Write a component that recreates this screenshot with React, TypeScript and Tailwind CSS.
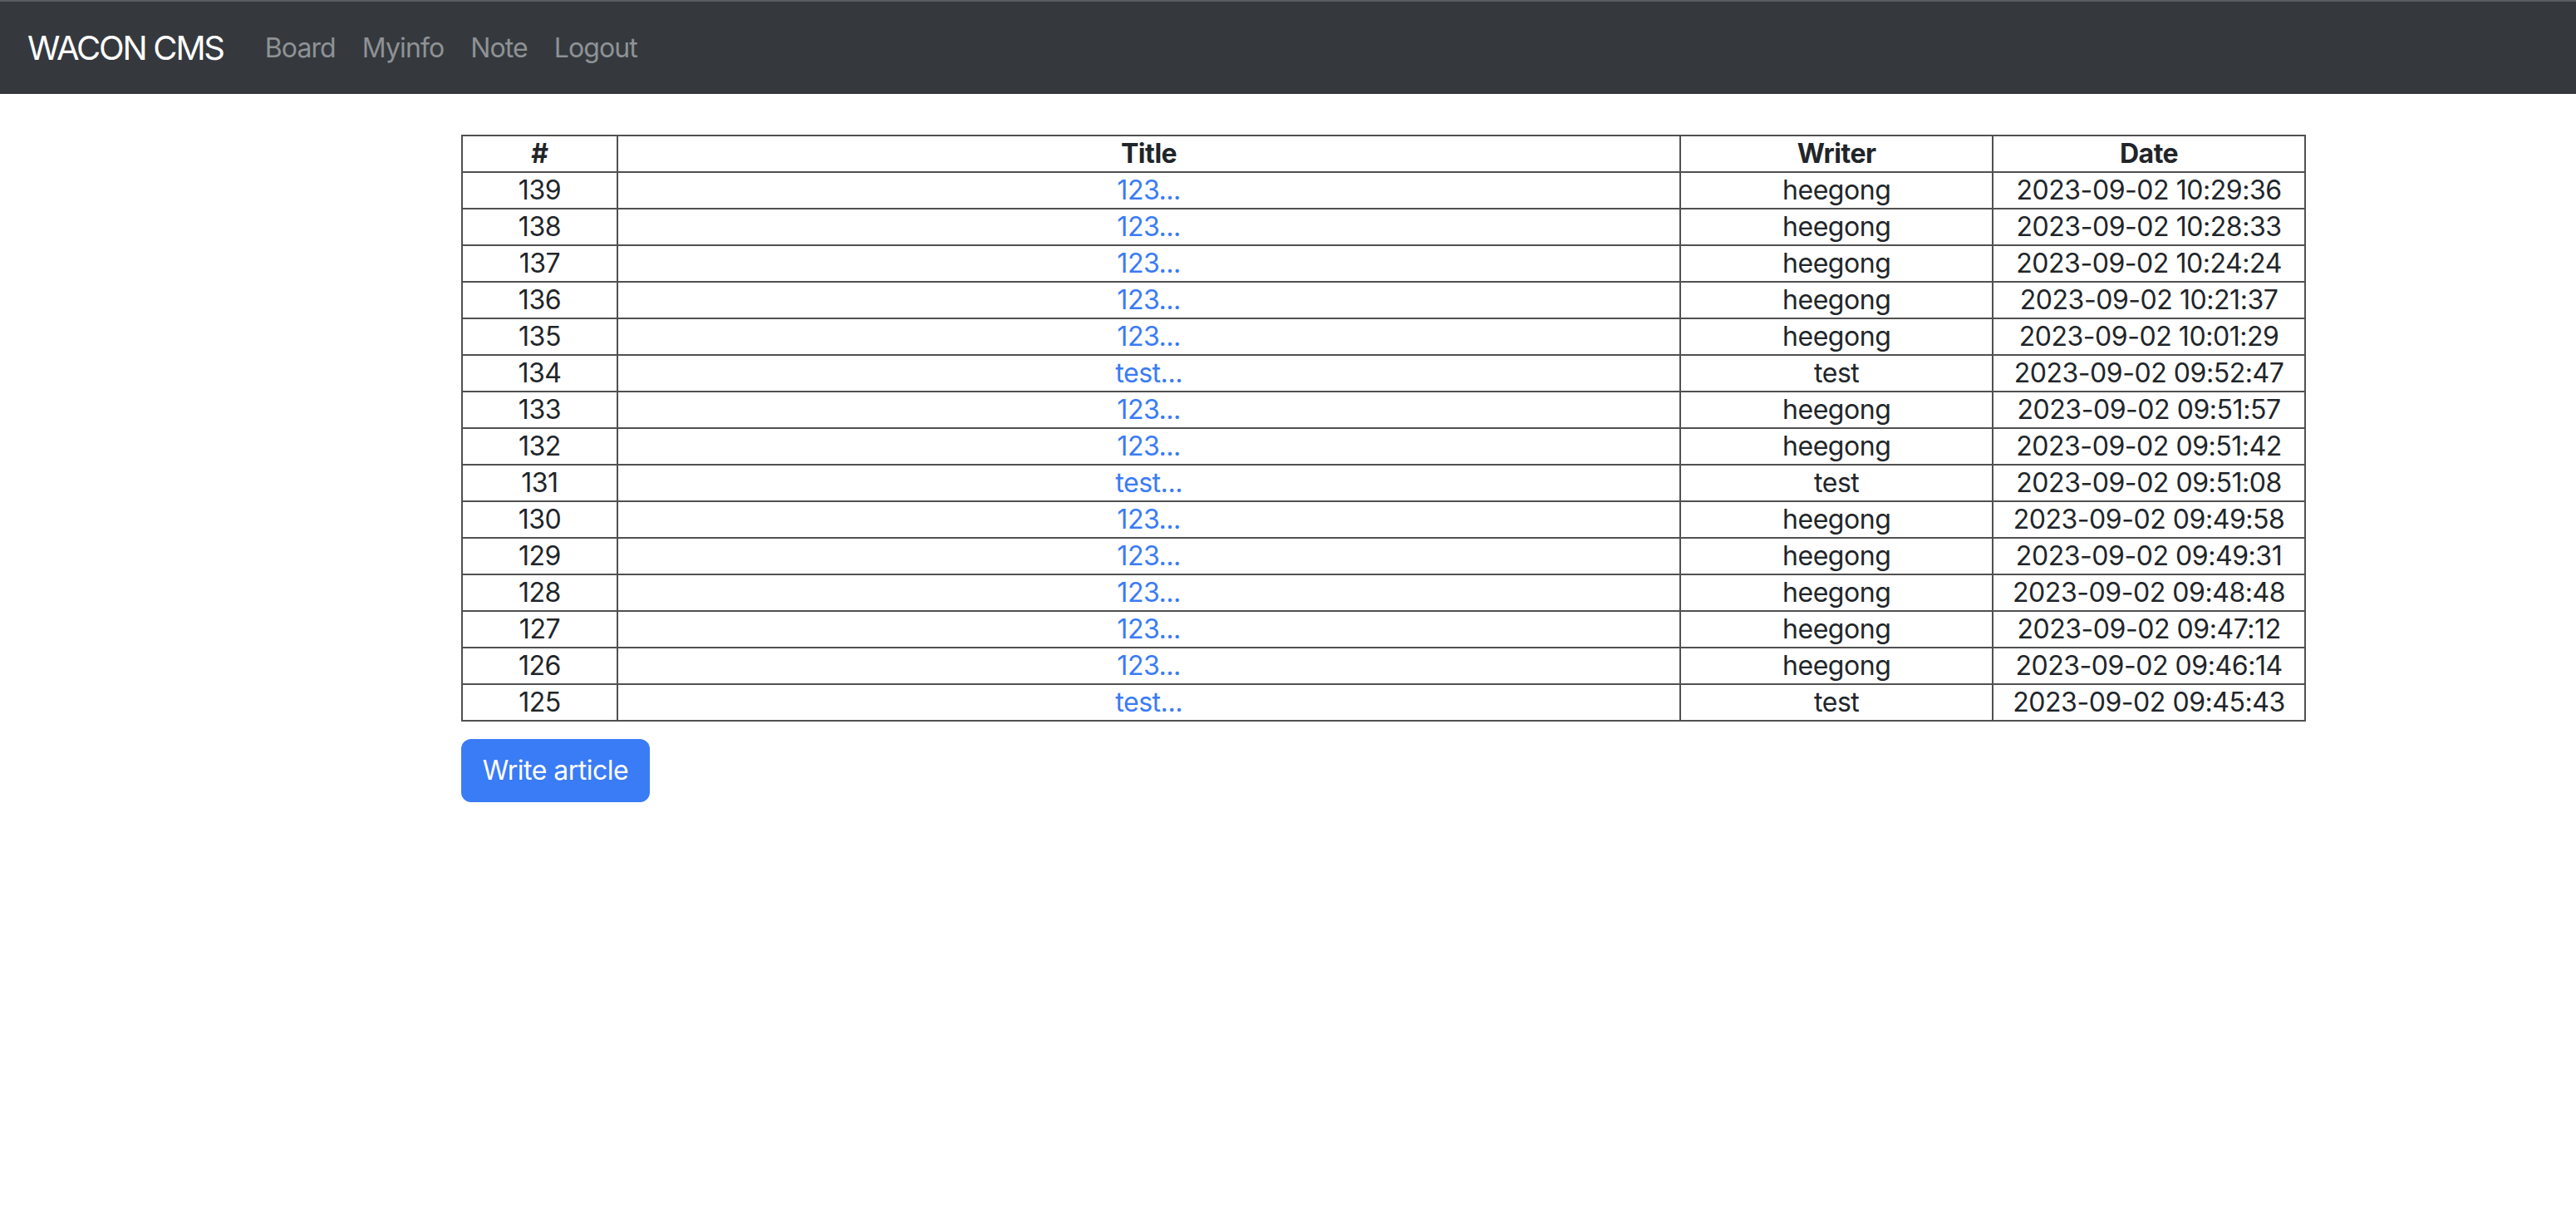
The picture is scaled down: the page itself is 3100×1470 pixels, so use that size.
import React from "react";

const rows: [number, string, string, string][] = [
  [139, "123...", "heegong", "2023-09-02 10:29:36"],
  [138, "123...", "heegong", "2023-09-02 10:28:33"],
  [137, "123...", "heegong", "2023-09-02 10:24:24"],
  [136, "123...", "heegong", "2023-09-02 10:21:37"],
  [135, "123...", "heegong", "2023-09-02 10:01:29"],
  [134, "test...", "test", "2023-09-02 09:52:47"],
  [133, "123...", "heegong", "2023-09-02 09:51:57"],
  [132, "123...", "heegong", "2023-09-02 09:51:42"],
  [131, "test...", "test", "2023-09-02 09:51:08"],
  [130, "123...", "heegong", "2023-09-02 09:49:58"],
  [129, "123...", "heegong", "2023-09-02 09:49:31"],
  [128, "123...", "heegong", "2023-09-02 09:48:48"],
  [127, "123...", "heegong", "2023-09-02 09:47:12"],
  [126, "123...", "heegong", "2023-09-02 09:46:14"],
  [125, "test...", "test", "2023-09-02 09:45:43"],
];

export default function App() {
  return (
    <div
      className="min-h-screen bg-white text-[#212529]"
      style={{ fontFamily: "Inter, 'Noto Sans', 'Liberation Sans', sans-serif" }}
    >
      <nav className="h-[113px] bg-[#35393e] border-t-2 border-[#5a5c5f] flex items-center px-[33px]">
        <span className="text-[40px] leading-[60px] text-white mr-[34px] tracking-[-2.2px] whitespace-nowrap">WACON CMS</span>
        <div className="flex items-center">
          {["Board", "Myinfo", "Note", "Logout"].map((l) => (
            <a key={l} className="px-[16px] text-[32px] leading-[48px] text-[#8f9295] tracking-[-0.9px] whitespace-nowrap" href="#">
              {l}
            </a>
          ))}
        </div>
      </nav>
      <div className="pl-[555px] pt-[49px]">
        <table className="border-collapse border-2 border-[#505050] text-[32px] text-center w-[2220px] tracking-[-0.45px]">
          <thead>
            <tr className="h-[44px]">
              <th className="w-[187px] border-2 border-[#505050] p-0 font-bold leading-[40px]">#</th>
              <th className="w-[1280px] border-2 border-[#505050] p-0 font-bold leading-[40px]">Title</th>
              <th className="w-[376px] border-2 border-[#505050] p-0 font-bold leading-[40px]">Writer</th>
              <th className="w-[376px] border-2 border-[#505050] p-0 font-bold leading-[40px]">Date</th>
            </tr>
          </thead>
          <tbody>
            {rows.map(([n, t, w, d]) => (
              <tr key={n} className="h-[44px]">
                <td className="border-2 border-[#505050] p-0 leading-[40px]">{n}</td>
                <td className="border-2 border-[#505050] p-0 leading-[40px]">
                  <a href="#" className="text-[#3a7bf6]">{t}</a>
                </td>
                <td className="border-2 border-[#505050] p-0 leading-[40px]">{w}</td>
                <td className="border-2 border-[#505050] p-0 leading-[40px]">{d}</td>
              </tr>
            ))}
          </tbody>
        </table>
        <button className="mt-[21px] h-[76px] w-[227px] rounded-[12px] bg-[#3a7bf6] text-white text-[32px] leading-[48px] px-0 whitespace-nowrap tracking-[-0.5px]">
          Write article
        </button>
      </div>
    </div>
  );
}
